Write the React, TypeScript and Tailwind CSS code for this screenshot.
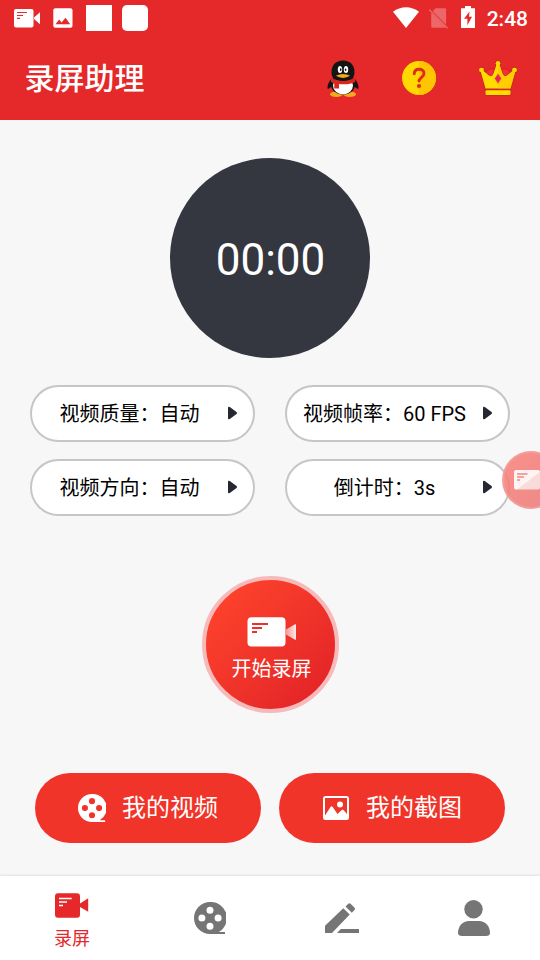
import React, { useState } from 'react';

type TabKey = 'record' | 'videos' | 'edit' | 'profile';

interface Option {
    label: string;
    value: string;
}

const OPTIONS: Option[] = [
    { label: '视频质量', value: '自动' },
    { label: '视频帧率', value: '60 FPS' },
    { label: '视频方向', value: '自动' },
    { label: '倒计时', value: '3s' },
];

// full-width colon
const SEPARATOR = '\uff1a';

const CameraNotificationIcon: React.FC = () => (
    <svg width="26" height="20" viewBox="0 0 26 20" fill="none">
        <rect x="0" y="1" width="19.5" height="18.5" rx="2" fill="#fff" />
        <path d="M20 9.5 26 4.3v12L20 11z" fill="#fff" />
        <path d="M3 4.500h10M3 7.500h6M3 10.300h3" stroke="#e52829" strokeWidth="1.200" />
    </svg>
);

const ImageNotificationIcon: React.FC = () => (
    <svg width="20" height="20" viewBox="0 0 20 20">
        <rect x="0.3" y="0.3" width="19.2" height="19.4" rx="2" fill="#fff" />
        <path d="M2.5 16.3 6.2 11.6 8.6 14.4 12.5 9.8 17.2 16.3z" fill="#e52829" />
    </svg>
);

const StatusBar: React.FC = () => (
    <div className="flex h-9 items-center pl-3.5 pr-3">
        <CameraNotificationIcon />
        <div className="ml-[13px]">
            <ImageNotificationIcon />
        </div>
        <div className="ml-[13px] size-[26px] bg-white" />
        <div className="ml-2.5 size-[26px] rounded-[5px] bg-white" />
        <div className="ml-auto flex items-center">
            <svg className="-mt-0.5" width="26" height="21" viewBox="0 0 26 21">
                <path d="M0 4.8C7.5-1.400 18.500-1.400 26 4.800L13 21z" fill="#fff" />
            </svg>
            <svg className="ml-2.5" width="20" height="21" viewBox="0 0 20 21">
                <path d="M6.500 .3h9.300a1.300 1.300 0 0 1 1.300 1.300v15.200L3.800 3.200zM2.200 4.600 16.800 19.300a1 1 0 0 1-.8.400H3.500a1.300 1.300 0 0 1-1.300-1.300z" fill="#ec6769" />
                <path d="M.4 1.700 18.600 20.200" stroke="#ec6769" strokeWidth="1.500" />
            </svg>
            <svg className="-mt-0.5 ml-3" width="14" height="22" viewBox="0 0 14 22">
                <path d="M0 2.200h4V0h6v2.200h4V22H0z" fill="#fff" />
                <path d="M8.500 5.500 3 12.800H6.400V19.200L11 10.800H8z" fill="#e52829" />
            </svg>
            <span className="mt-0.5 ml-3 text-[21px] leading-none font-medium text-white">2:48</span>
        </div>
    </div>
);

const PenguinIcon: React.FC = () => (
    <svg className="mt-0.5" width="32" height="38" viewBox="0 0 32 38">
        <ellipse cx="9.3" cy="34.2" rx="6.3" ry="2.8" fill="#f4a91c" />
        <ellipse cx="22.7" cy="34.2" rx="6.3" ry="2.8" fill="#f4a91c" />
        <path d="M5 18C1.500 22 .3 25 .5 28.500c1 1 3-1 5-3zM27 18c3.500 4 4.700 7 4.500 10.500-1 1-3-1-5-3z" fill="#141414" />
        <ellipse cx="16" cy="24.500" rx="12" ry="10.200" fill="#141414" />
        <ellipse cx="16" cy="25.500" rx="10" ry="9" fill="#fff" />
        <path d="M16 .5C8.500.5 4.500 5.500 4.500 12c0 5 2 9.500 11.500 9.500S27.500 17 27.500 12C27.500 5.500 23.500.5 16 .5z" fill="#141414" />
        <path d="M4.200 17.500c6 4.500 17.600 4.500 23.600 0l.6 4.200c-4 2.400-10 3-16.400 2.400v4.300H7.300V23.500L3.800 21.800z" fill="#d9251d" />
        <ellipse cx="13" cy="9.500" rx="2.200" ry="3.500" fill="#fff" />
        <ellipse cx="19" cy="9.500" rx="2.200" ry="3.500" fill="#fff" />
        <ellipse cx="13.700" cy="9.700" rx=".8" ry="1.400" fill="#111" />
        <ellipse cx="18.600" cy="9.700" rx=".8" ry="1.200" fill="#111" />
        <path d="M8.800 15.800Q16 12 23.200 15.800 16 20 8.800 15.800z" fill="#f4a91c" />
    </svg>
);

const HelpIcon: React.FC = () => (
    <svg width="34" height="34" viewBox="0 0 34 34" fill="none">
        <circle cx="17" cy="17" r="17" fill="#ffd800" />
        <path d="M17 0a17 17 0 0 1 0 34z" fill="#ffc500" />
        <path d="M12.200 12.800c.2-3.100 2.200-4.500 4.900-4.500 2.800 0 4.900 1.600 4.900 4.300 0 3.800-5 4.100-5 7.400" stroke="#e02c20" strokeWidth="2.900" strokeLinecap="round" />
        <circle cx="17" cy="25" r="2.100" fill="#e02c20" />
    </svg>
);

const CrownIcon: React.FC = () => (
    <svg width="40" height="37" viewBox="0 0 40 37">
        <path d="M7 14c2.500-6 9-7 13-2 4-5 10.500-4 13 2l-3 9H10z" fill="#f2303a" stroke="#c9201f" strokeWidth=".8" />
        <g fill="#ffdb00" stroke="#c4281c" strokeWidth="1.400" paintOrder="stroke">
            <rect x="7.500" y="30.300" width="25" height="4.700" rx="1" />
            <circle cx="20" cy="3.500" r="2.300" />
            <circle cx="3.500" cy="10" r="2.300" />
            <circle cx="36.500" cy="10" r="2.300" />
            <path d="M18.500 4.500h3L24.500 13.500Q26 17.500 29 15.500L35 10.500 37.300 11.500 32.500 28.500H7.500L2.700 11.500 5 10.500 11 15.500Q14 17.500 15.500 13.500z" />
        </g>
        {/* hide the outline between the tips and the body */}
        <g fill="#ffdb00">
            <circle cx="20" cy="3.500" r="2.200" />
            <circle cx="3.500" cy="10" r="2.200" />
            <circle cx="36.500" cy="10" r="2.200" />
        </g>
        <path d="M20 5h1.300L24.500 13.500Q26 17.500 29 15.500L35 10.500 37.300 11.500 32.500 28.500H20z" fill="#ffc000" opacity=".5" />
        <path d="M20 13.700 23.200 18.600 20 23.500 16.800 18.600z" fill="#e9254f" stroke="#f0703a" strokeWidth=".5" />
    </svg>
);

const ReelIcon: React.FC<{ size: number }> = ({ size }) => (
    <svg width={size} height={size} viewBox="0 0 32 32" fill="currentColor">
        <path
            fillRule="evenodd"
            d="M16 0a16 16 0 0 1 8.800 29.900H31V32H16A16 16 0 0 1 16 0zM16 4.700a3.500 3.500 0 1 0 0 7 3.500 3.500 0 0 0 0-7zM7.900 12.600a3.500 3.500 0 1 0 0 7 3.500 3.500 0 0 0 0-7zM24.100 12.600a3.500 3.500 0 1 0 0 7 3.500 3.500 0 0 0 0-7zM16 20.800a3.500 3.500 0 1 0 0 7 3.500 3.500 0 0 0 0-7z"
        />
    </svg>
);

const PictureIcon: React.FC = () => (
    <svg width="26" height="24" viewBox="0 0 26 24" fill="none">
        <rect x="1" y="1" width="24" height="22" rx="1.500" stroke="#fff" strokeWidth="2" />
        <circle cx="17" cy="8.500" r="3" fill="#fff" />
        <path d="M2 19.500 7.500 11c.6-.9 1.600-.9 2.200 0L14.500 18l4.200-4c.5-.5 1.300-.5 1.800 0L24 18v5H2z" fill="#fff" />
    </svg>
);

const TabCameraIcon: React.FC = () => (
    <svg width="34" height="25" viewBox="0 0 34 25" fill="none">
        <rect x="0" y="0.200" width="25" height="24.500" rx="3" fill="currentColor" />
        <path d="M25 10.500 33.200 5.300v13.500L25 14z" fill="currentColor" />
        <path d="M4 5.500h12.700M4 9h8M4 12.500h4" stroke="#fff" strokeWidth="1.500" />
    </svg>
);

const PencilIcon: React.FC = () => (
    <svg width="34" height="30" viewBox="0 0 34 30" fill="currentColor">
        <path d="M0 30V22.800L18.300 5.200 24.700 11.500 7 30zM20.500 3.500 23.300.7c.7-.7 1.500-.7 2.200 0l4 4c.7.7.7 1.500 0 2.200L26.800 9.800zM15.800 26H34v3.900H12z" />
    </svg>
);

const UserIcon: React.FC = () => (
    <svg width="32" height="36" viewBox="0 0 32 36" fill="currentColor">
        <circle cx="15.500" cy="9.200" r="9.200" />
        <path d="M11 21h10c6.500 0 11 5.500 11 12 0 2-1.500 2.800-4 3H4c-2.500-.2-4-1-4-3 0-6.500 4.500-12 11-12z" />
    </svg>
);

const OptionPill: React.FC<{ option: Option }> = ({ option }) => (
    <button className="flex h-[57px] items-center rounded-full border-2 border-[#c6c6c6] bg-white text-black">
        <span className="w-[195px] text-center text-xl whitespace-nowrap">
            {option.label}{SEPARATOR}{option.value}
        </span>
        <svg className="-mt-px" width="11" height="14" viewBox="0 0 11 14" fill="#252830">
            <path d="M1 2Q1 0 2.800 1.100L9.500 5.900Q10.800 7 9.500 8.100L2.800 12.900Q1 14 1 12z" />
        </svg>
    </button>
);

const RecordButton: React.FC = () => (
    <button className="flex size-[137px] flex-col items-center rounded-full border-4 border-[#f6babb] bg-linear-to-br from-[#ff432c] from-10% to-[#e22328] to-90% bg-origin-border pt-[37px] text-white">
        <svg className="ml-[3px]" width="50" height="30" viewBox="0 0 50 30" fill="none">
            <defs>
                <linearGradient id="lens" x1="38" y1="0" x2="49" y2="0" gradientUnits="userSpaceOnUse">
                    <stop stopColor="#fff" stopOpacity=".45" />
                    <stop offset="1" stopColor="#fff" stopOpacity=".9" />
                </linearGradient>
            </defs>
            <rect x="0.500" y="0.300" width="38" height="29.200" rx="4" fill="#fff" />
            <path d="M39 12.500 48 7.300q1-.5 1 .7v14q0 1.200-1 .7L39 17.500z" fill="url(#lens)" />
            <path d="M5 7h16M5 11h10M5 15h5" stroke="#ef3029" strokeWidth="2" />
        </svg>
        <span className="mt-2 ml-[3px] text-xl">开始录屏</span>
    </button>
);

const FloatingBubble: React.FC = () => (
    <div className="absolute top-[451px] left-[502px] flex size-[58px] items-center rounded-full border-2 border-[#f0a19e]/80 bg-linear-to-br from-[#fb7f76]/85 to-[#e97575]/85 bg-origin-border pl-2.5">
        <svg width="27" height="20" viewBox="0 0 27 20" fill="none">
            <rect width="26" height="19.500" rx="2.500" fill="#f9dbda" />
            <path d="M2.500 0h21Q26 0 26 2L3 19.500Q0 19.500 0 17V2.500Q0 0 2.500 0z" fill="#fff4f3" />
            <path d="M3 4h10.500M3 7h7M3 10h3" stroke="#f3857e" strokeWidth="1.300" />
        </svg>
    </div>
);

const TABS: { key: TabKey; label?: string; icon: React.ReactNode }[] = [
    { key: 'record', label: '录屏', icon: <TabCameraIcon /> },
    { key: 'videos', icon: <ReelIcon size={32} /> },
    { key: 'edit', icon: <PencilIcon /> },
    { key: 'profile', icon: <UserIcon /> },
];

const App: React.FC = () => {
    const [activeTab, setActiveTab] = useState<TabKey>('record');

    return (
        <div className="relative flex h-[960px] w-[540px] flex-col overflow-hidden bg-[#f7f7f7] font-[Roboto,'Noto_Sans_CJK_SC',sans-serif]">
            <header className="h-[120px] bg-[#e52829]">
                <StatusBar />
                <div className="flex h-[84px] items-center pr-[22px] pl-[24.5px]">
                    <h1 className="text-[30px] font-medium text-white">录屏助理</h1>
                    <div className="ml-auto flex items-center">
                        <PenguinIcon />
                        <div className="mr-[42px] ml-[43px]">
                            <HelpIcon />
                        </div>
                        <CrownIcon />
                    </div>
                </div>
            </header>

            <main className="flex flex-1 flex-col items-center pt-[38px]">
                <div className="flex size-[200px] items-center justify-center rounded-full bg-[#343640] pt-1 pl-px text-[44px] text-white">
                    00:00
                </div>

                <div className="mt-[27px] grid w-[480px] grid-cols-2 gap-x-[30px] gap-y-[17px]">
                    {OPTIONS.map(option => (
                        <OptionPill key={option.label} option={option} />
                    ))}
                </div>

                <div className="mt-[60px]">
                    <RecordButton />
                </div>

                <div className="mt-[60px] flex gap-[18px] text-2xl text-white">
                    <button className="flex h-[70px] w-[226px] items-center rounded-full bg-[#f13429] pl-[43px]">
                        <ReelIcon size={28} />
                        <span className="ml-4">我的视频</span>
                    </button>
                    <button className="flex h-[70px] w-[226px] items-center rounded-full bg-[#f13429] pl-[44px]">
                        <PictureIcon />
                        <span className="ml-[17px]">我的截图</span>
                    </button>
                </div>
            </main>

            <nav className="flex h-[84px] bg-white shadow-[0_-1px_2px_rgba(0,0,0,0.09)]">
                {TABS.map(tab => (
                    <button
                        key={tab.key}
                        onClick={() => setActiveTab(tab.key)}
                        className={`flex flex-col items-center justify-center ${
                            activeTab === tab.key ? 'w-36 text-[#e52829]' : 'w-[132px] text-[#757575]'
                        } ${tab.label ? 'pt-[9px]' : ''}`}
                    >
                        {tab.icon}
                        {tab.label && <span className="mt-[7px] text-lg">{tab.label}</span>}
                    </button>
                ))}
            </nav>

            <FloatingBubble />
        </div>
    );
};

export default App;
